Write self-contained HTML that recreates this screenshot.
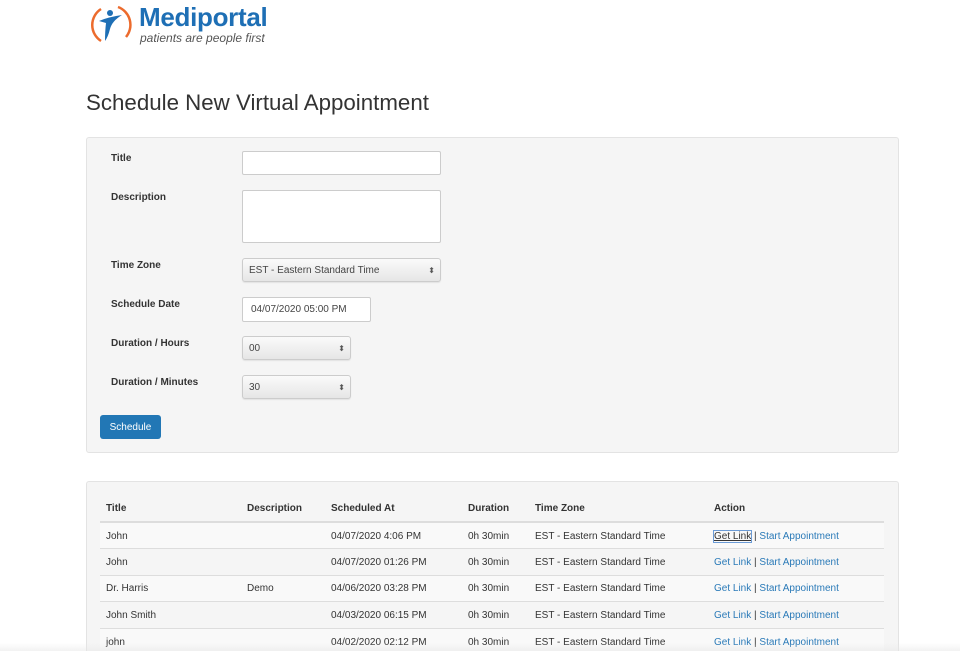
<!DOCTYPE html>
<html><head><meta charset="utf-8"><style>
html,body{margin:0;width:960px;height:651px;overflow:hidden}
body{background:#fff;font-family:"Liberation Sans",Arial,sans-serif;color:#333;position:relative}
.a{position:absolute}
.lbl{position:absolute;left:111px;font-size:10px;font-weight:bold;color:#333}
.inp{position:absolute;left:242px;background:#fff;border:1px solid #ccc;box-sizing:border-box;border-radius:2px;font-size:10px;color:#444;padding-left:8px;display:flex;align-items:center}
.sel{position:absolute;left:242px;box-sizing:border-box;border:1px solid #ccc;border-radius:3px;background:linear-gradient(#fafafa,#e6e6e6);font-size:10px;color:#444;padding-left:6px;display:flex;align-items:center;box-shadow:0 1px 1px rgba(0,0,0,.08)}
.sel:after{content:"⬍";position:absolute;right:5px;font-size:8px;color:#555}
table{border-collapse:collapse;font-size:10px;position:absolute;left:100px;top:496px;width:784px}
th{text-align:left;font-weight:bold;height:25px;padding:0 6px;border-bottom:2px solid #ddd;font-size:10px}
td{height:26.5px;padding:2px 6px 0;border-top:1px solid #ddd;box-sizing:border-box;line-height:12px}
tr.s td{background:#f9f9f9}
a{color:#2a7ab8;text-decoration:none}
</style></head><body>
<svg class="a" style="left:88px;top:3px" width="46" height="44" viewBox="0 0 46 44">
<path d="M13 6 A19 19 0 0 0 13 38" fill="none" stroke="#ec6b2d" stroke-width="2.5"/>
<path d="M30 4 A19 19 0 0 1 38 34" fill="none" stroke="#ec6b2d" stroke-width="2.5"/>
<circle cx="22" cy="10" r="3" fill="#1e6fb5"/>
<path d="M11 18 Q20 14 34 12 Q24 18 22 26 Q20 34 17 38 Q17 28 18 20 Z" fill="#1e6fb5"/>
</svg>
<div class="a" style="left:139px;top:2px;font-size:26px;font-weight:bold;color:#1e6fb5;letter-spacing:-0.3px">Mediportal</div>
<div class="a" style="left:140px;top:31px;font-size:12px;font-style:italic;color:#555">patients are people first</div>
<div class="a" style="left:86px;top:90px;font-size:22.3px;color:#333">Schedule New Virtual Appointment</div>
<div class="a" style="left:86px;top:137px;width:813px;height:316px;box-sizing:border-box;background:#f5f5f5;border:1px solid #e3e3e3;border-radius:3px"></div>
<div class="lbl" style="top:153px">Title</div>
<div class="lbl" style="top:192px">Description</div>
<div class="lbl" style="top:260px">Time Zone</div>
<div class="lbl" style="top:299px">Schedule Date</div>
<div class="lbl" style="top:338px">Duration / Hours</div>
<div class="lbl" style="top:377px">Duration / Minutes</div>
<div class="inp" style="top:151px;width:199px;height:24px"></div>
<div class="inp" style="top:190px;width:199px;height:53px"></div>
<div class="sel" style="top:258px;width:199px;height:24px">EST - Eastern Standard Time</div>
<div class="inp" style="top:297px;width:129px;height:25px">04/07/2020 05:00 PM</div>
<div class="sel" style="top:336px;width:109px;height:24px">00</div>
<div class="sel" style="top:375px;width:109px;height:24px">30</div>
<div class="a" style="left:100px;top:415px;width:61px;height:24px;background:#2277b5;border-radius:3px;color:#fff;font-size:10px;display:flex;align-items:center;justify-content:center">Schedule</div>
<div class="a" style="left:86px;top:481px;width:813px;height:170px;box-sizing:border-box;background:#f5f5f5;border:1px solid #e3e3e3;border-bottom:none;border-radius:3px 3px 0 0"></div>
<table>
<tr><th style="width:129px">Title</th><th style="width:72px">Description</th><th style="width:125px">Scheduled At</th><th style="width:55px">Duration</th><th style="width:167px">Time Zone</th><th>Action</th></tr>
<tr class="s"><td>John</td><td></td><td>04/07/2020 4:06 PM</td><td>0h 30min</td><td>EST - Eastern Standard Time</td><td><a style="color:#333;text-decoration:underline;outline:1px solid #6b9bd6">Get Link</a> | <a>Start Appointment</a></td></tr>
<tr><td>John</td><td></td><td>04/07/2020 01:26 PM</td><td>0h 30min</td><td>EST - Eastern Standard Time</td><td><a>Get Link</a> | <a>Start Appointment</a></td></tr>
<tr class="s"><td>Dr. Harris</td><td>Demo</td><td>04/06/2020 03:28 PM</td><td>0h 30min</td><td>EST - Eastern Standard Time</td><td><a>Get Link</a> | <a>Start Appointment</a></td></tr>
<tr><td>John Smith</td><td></td><td>04/03/2020 06:15 PM</td><td>0h 30min</td><td>EST - Eastern Standard Time</td><td><a>Get Link</a> | <a>Start Appointment</a></td></tr>
<tr class="s"><td>john</td><td></td><td>04/02/2020 02:12 PM</td><td>0h 30min</td><td>EST - Eastern Standard Time</td><td><a>Get Link</a> | <a>Start Appointment</a></td></tr>
</table>
<div class="a" style="left:0;top:643px;width:960px;height:8px;background:linear-gradient(rgba(255,255,255,0),rgba(230,230,230,.5))"></div>
</body></html>
